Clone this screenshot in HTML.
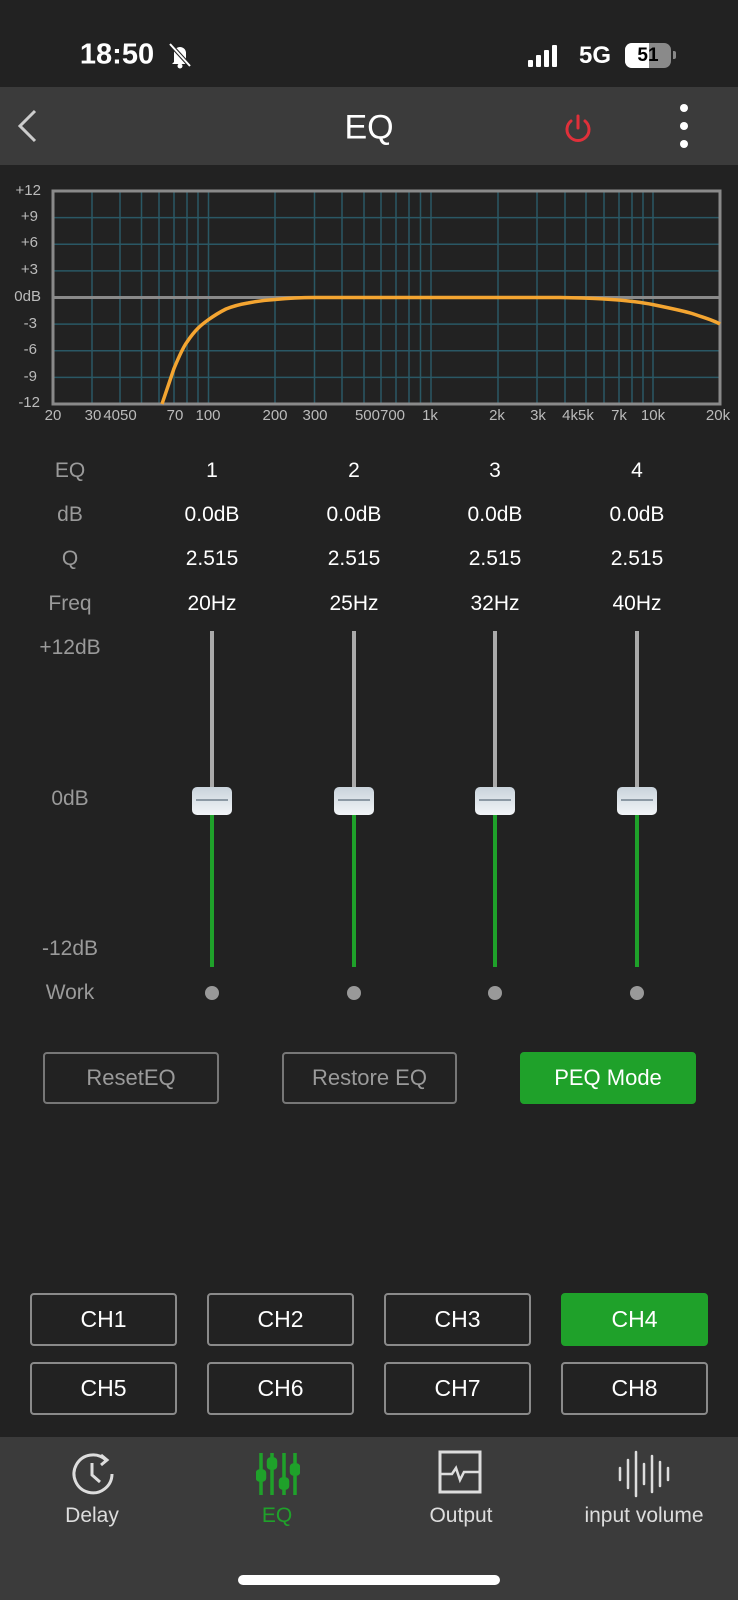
<!DOCTYPE html>
<html><head><meta charset="utf-8"><style>
*{margin:0;padding:0;box-sizing:border-box}
body{width:738px;height:1600px;background:#222;font-family:"Liberation Sans",sans-serif;color:#fff;position:relative;overflow:hidden}
.a{position:absolute}
.t{position:absolute;transform:translate(-50%,-50%);white-space:nowrap}
.g{color:#9a9a9a}
.btn{position:absolute;border:2px solid #777;border-radius:4px;display:flex;align-items:center;justify-content:center;font-size:22px}
.ch{position:absolute;border:2px solid #8a8a8a;border-radius:4px;display:flex;align-items:center;justify-content:center;font-size:23px;width:147px;height:53px}
.knob{position:absolute;width:40px;height:28px;border-radius:5px;background:linear-gradient(#c9d3db,#f2f5f7);transform:translate(-50%,-50%)}
.knob:after{content:"";position:absolute;left:4px;right:4px;top:12px;height:2px;background:#8c99a4}
</style></head><body>
<div class="t" style="left:117px;top:55px;font-size:29px;font-weight:bold">18:50</div>
<svg class="a" style="left:166px;top:40px" width="28" height="30" viewBox="0 0 28 30"><path d="M8 22V13a6 6 0 0 1 12 0v9l2 2H6z" fill="#fff"/><circle cx="14" cy="26" r="2.5" fill="#fff"/><path d="M4 4l20 22" stroke="#222" stroke-width="4"/><path d="M4 4l20 22" stroke="#fff" stroke-width="2"/></svg>
<svg class="a" style="left:528px;top:44px" width="36" height="24"><rect x="0" y="16" width="5" height="7" rx="1" fill="#fff"/><rect x="8" y="11" width="5" height="12" rx="1" fill="#fff"/><rect x="16" y="6" width="5" height="17" rx="1" fill="#fff"/><rect x="24" y="1" width="5" height="22" rx="1" fill="#fff"/></svg>
<div class="t" style="left:595px;top:56px;font-size:24px;font-weight:bold">5G</div>
<div class="a" style="left:625px;top:43px;width:46px;height:25px;border-radius:7px;background:#8a8a8a;overflow:hidden"><div style="width:24px;height:25px;background:#fff"></div><div class="t" style="left:23px;top:13px;color:#000;font-weight:bold;font-size:19px">51</div></div>
<div class="a" style="left:673px;top:51px;width:3px;height:8px;background:#888;border-radius:0 2px 2px 0"></div>
<div class="a" style="left:0;top:87px;width:738px;height:78px;background:#3b3b3b"></div>
<svg class="a" style="left:15px;top:108px" width="24" height="36"><path d="M20 3L5 18l15 15" stroke="#ccc" stroke-width="3" fill="none"/></svg>
<div class="t" style="left:369px;top:128px;font-size:34px">EQ</div>
<svg class="a" style="left:562px;top:112px" width="32" height="32"><path d="M9 9a11 11 0 1 0 14 0" stroke="#e0303a" stroke-width="3" fill="none" stroke-linecap="round"/><path d="M16 4v12" stroke="#e0303a" stroke-width="3" stroke-linecap="round"/></svg>
<div class="a" style="left:680px;top:104px;width:8px;height:8px;border-radius:4px;background:#fff;box-shadow:0 18px 0 #fff,0 36px 0 #fff"></div>

<svg class="a" style="left:0;top:170px" width="738" height="260">
<g font-family="Liberation Sans" font-size="15" fill="#bbb" text-anchor="end">
<text x="41" y="25">+12</text><text x="38" y="51">+9</text><text x="38" y="77">+6</text><text x="38" y="104">+3</text><text x="41" y="131">0dB</text><text x="37" y="158">-3</text><text x="37" y="184">-6</text><text x="37" y="211">-9</text><text x="40" y="237">-12</text>
</g>
<g stroke="#2a5865" stroke-width="1.5">
<path d="M92 21V234M120 21V234M141.5 21V234M159 21V234M174 21V234M187 21V234M198 21V234M208.5 21V234M275 21V234M314.5 21V234M342 21V234M364 21V234M381 21V234M396 21V234M409 21V234M420.5 21V234M431 21V234M498 21V234M537 21V234M565 21V234M586 21V234M604 21V234M619 21V234M632 21V234M643 21V234M653 21V234"/>
<path d="M53 47.6H720M53 74.25H720M53 100.9H720M53 154.1H720M53 180.75H720M53 207.4H720"/>
</g>
<path d="M53 127.5H720" stroke="#8a8a8a" stroke-width="3"/>
<rect x="53" y="21" width="667" height="213" fill="none" stroke="#8a8a8a" stroke-width="3"/>
<path d="M162 234L174 198.5C180 184 184 176 187 172C195 160 201 155 208 150C215 145 220 142 226 139C236 135 242 134 248 133C258 131 266 130 275 129.5C290 128 300 127.5 314 127.5L560 127.5C600 128 630 130 653 134.6C672 138.5 684 141 692 143.5C705 148 713 150 720 154" stroke="#f4a531" stroke-width="3.5" fill="none"/>
<g font-family="Liberation Sans" font-size="15" fill="#bbb" text-anchor="middle">
<text x="53" y="250">20</text><text x="93" y="250">30</text><text x="120" y="250">4050</text><text x="175" y="250">70</text><text x="208" y="250">100</text><text x="275" y="250">200</text><text x="315" y="250">300</text><text x="380" y="250">500700</text><text x="430" y="250">1k</text><text x="497" y="250">2k</text><text x="538" y="250">3k</text><text x="578" y="250">4k5k</text><text x="619" y="250">7k</text><text x="653" y="250">10k</text><text x="718" y="250">20k</text>
</g>
</svg>

<div style="font-size:21px">
<div class="t g" style="left:70px;top:471px">EQ</div><div class="t g" style="left:70px;top:515px">dB</div><div class="t g" style="left:70px;top:559px">Q</div><div class="t g" style="left:70px;top:604px">Freq</div>
<div class="t" style="left:212px;top:471px">1</div><div class="t" style="left:354px;top:471px">2</div><div class="t" style="left:495px;top:471px">3</div><div class="t" style="left:637px;top:471px">4</div>
<div class="t" style="left:212px;top:515px">0.0dB</div><div class="t" style="left:354px;top:515px">0.0dB</div><div class="t" style="left:495px;top:515px">0.0dB</div><div class="t" style="left:637px;top:515px">0.0dB</div>
<div class="t" style="left:212px;top:559px">2.515</div><div class="t" style="left:354px;top:559px">2.515</div><div class="t" style="left:495px;top:559px">2.515</div><div class="t" style="left:637px;top:559px">2.515</div>
<div class="t" style="left:212px;top:604px">20Hz</div><div class="t" style="left:354px;top:604px">25Hz</div><div class="t" style="left:495px;top:604px">32Hz</div><div class="t" style="left:637px;top:604px">40Hz</div>
<div class="t g" style="left:70px;top:648px">+12dB</div><div class="t g" style="left:70px;top:799px">0dB</div><div class="t g" style="left:70px;top:949px">-12dB</div><div class="t g" style="left:70px;top:993px">Work</div>
</div>

<div class="a" style="left:210px;top:631px;width:4px;height:170px;background:#aaa"></div><div class="a" style="left:210px;top:801px;width:4px;height:166px;background:#1fa12a"></div><div class="knob" style="left:212px;top:801px"></div>
<div class="a" style="left:352px;top:631px;width:4px;height:170px;background:#aaa"></div><div class="a" style="left:352px;top:801px;width:4px;height:166px;background:#1fa12a"></div><div class="knob" style="left:354px;top:801px"></div>
<div class="a" style="left:493px;top:631px;width:4px;height:170px;background:#aaa"></div><div class="a" style="left:493px;top:801px;width:4px;height:166px;background:#1fa12a"></div><div class="knob" style="left:495px;top:801px"></div>
<div class="a" style="left:635px;top:631px;width:4px;height:170px;background:#aaa"></div><div class="a" style="left:635px;top:801px;width:4px;height:166px;background:#1fa12a"></div><div class="knob" style="left:637px;top:801px"></div>
<div class="a" style="left:205px;top:986px;width:14px;height:14px;border-radius:7px;background:#999"></div>
<div class="a" style="left:347px;top:986px;width:14px;height:14px;border-radius:7px;background:#999"></div>
<div class="a" style="left:488px;top:986px;width:14px;height:14px;border-radius:7px;background:#999"></div>
<div class="a" style="left:630px;top:986px;width:14px;height:14px;border-radius:7px;background:#999"></div>

<div class="btn g" style="left:43px;top:1052px;width:176px;height:52px">ResetEQ</div>
<div class="btn g" style="left:282px;top:1052px;width:175px;height:52px">Restore EQ</div>
<div class="btn" style="left:520px;top:1052px;width:176px;height:52px;background:#1fa12a;border-color:#1fa12a">PEQ Mode</div>

<div class="ch" style="left:30px;top:1293px">CH1</div><div class="ch" style="left:207px;top:1293px">CH2</div><div class="ch" style="left:384px;top:1293px">CH3</div><div class="ch" style="left:561px;top:1293px;background:#1fa12a;border-color:#1fa12a">CH4</div>
<div class="ch" style="left:30px;top:1362px">CH5</div><div class="ch" style="left:207px;top:1362px">CH6</div><div class="ch" style="left:384px;top:1362px">CH7</div><div class="ch" style="left:561px;top:1362px">CH8</div>

<div class="a" style="left:0;top:1437px;width:738px;height:163px;background:#3b3b3b"></div>
<svg class="a" style="left:70px;top:1451px" width="46" height="46"><path d="M36 9A19 19 0 1 0 42 23" stroke="#ddd" stroke-width="3" fill="none"/><path d="M31 4l6 5-6 5" stroke="#ddd" stroke-width="3" fill="none"/><path d="M22 12v12l8 7" stroke="#ddd" stroke-width="3" fill="none"/></svg>
<svg class="a" style="left:256px;top:1451px" width="44" height="46" stroke="#1fa12a" stroke-width="3.5" fill="#1fa12a"><path d="M5 2v42M16 2v42M28 2v42M39 2v42"/><rect x="1.5" y="20" width="7" height="9" rx="2"/><rect x="12.5" y="8" width="7" height="9" rx="2"/><rect x="24.5" y="28" width="7" height="9" rx="2"/><rect x="35.5" y="14" width="7" height="9" rx="2"/></svg>
<svg class="a" style="left:438px;top:1450px" width="46" height="46"><rect x="2" y="2" width="40" height="40" stroke="#ddd" stroke-width="3" fill="none"/><path d="M2 24h12l4-6 4 12 4-8h16" stroke="#ddd" stroke-width="2.5" fill="none"/></svg>
<svg class="a" style="left:617px;top:1450px" width="56" height="48" stroke="#ddd" stroke-width="2.5" stroke-linecap="round"><path d="M3 18v12M11 10v28M19 2v44M27 14v20M35 6v36M43 12v24M51 18v12"/></svg>
<div class="t" style="left:92px;top:1516px;font-size:21px;color:#ddd">Delay</div>
<div class="t" style="left:277px;top:1516px;font-size:21px;color:#1fa12a">EQ</div>
<div class="t" style="left:461px;top:1516px;font-size:21px;color:#ddd">Output</div>
<div class="t" style="left:644px;top:1516px;font-size:21px;color:#ddd">input volume</div>
<div class="a" style="left:238px;top:1575px;width:262px;height:10px;border-radius:5px;background:#fff"></div>
</body></html>
